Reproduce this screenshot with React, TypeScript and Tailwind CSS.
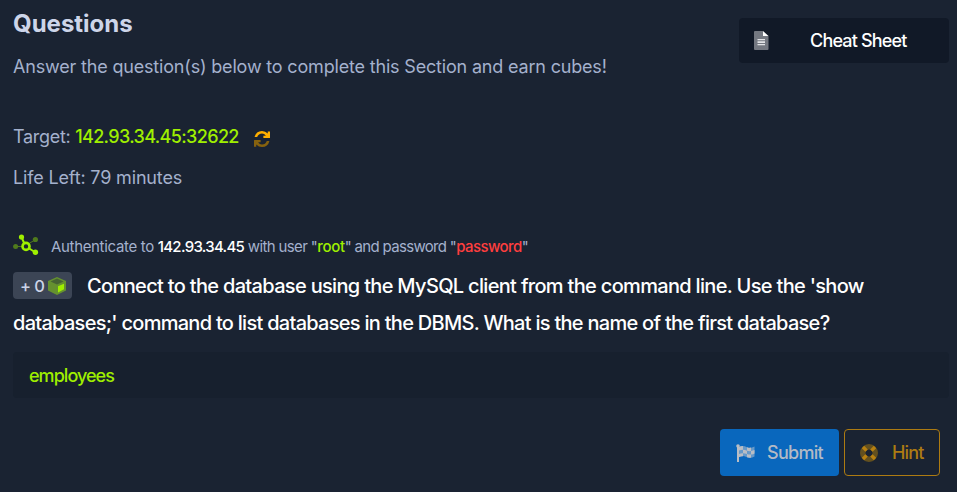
import React from "react";

function FileIcon() {
  return (
    <svg width="15" height="19" viewBox="0 0 15 19" className="shrink-0">
      <path d="M1 0h8v5h5.500v13a1 1 0 0 1-1 1H1a1 1 0 0 1-1-1V1a1 1 0 0 1 1-1z" fill="#747881" />
      <path d="M9 0 14.500 5H9z" fill="#fff" />
      <path d="M3.500 8h7.500v1.300H3.500zM3.500 10.300h7.500v1.700H3.500zM3.500 13h7.500v1.300H3.500z" fill="#e2e3e6" />
    </svg>
  );
}

function RefreshIcon() {
  return (
    <svg width="16" height="16" viewBox="0 0 512 512" className="shrink-0">
      <path d="M0 500V300q0-12 12-12h200v72h-81q48 72 125 72 110 0 155-112h83q-48 192-238 192-110 0-184-83v71z" fill="#86620f" />
      <path d="M512 12v200q0 12-12 12H300v-72h81q-48-72-125-72Q146 80 101 192H18Q66 0 256 0q110 0 184 83V12z" fill="#ffaf00" />
    </svg>
  );
}

function NodesIcon() {
  return (
    <svg width="26" height="22" viewBox="0 0 26 22" className="shrink-0">
      <g fill="#4f7a1c" stroke="#4f7a1c">
        <path d="M3 12.500h6M16 9.500l5-3" strokeWidth="1" />
        <circle cx="2.600" cy="12.500" r="2.500" stroke="none" />
        <circle cx="22.400" cy="5.500" r="2.600" stroke="none" />
      </g>
      <path d="m8.500 3 3 7M15.500 14l7 4.500" stroke="#9fef00" strokeWidth="2" />
      <circle cx="8.500" cy="3" r="2.600" fill="#9fef00" />
      <circle cx="22.400" cy="18.300" r="2.700" fill="#9fef00" />
      <circle cx="13" cy="12.400" r="3.500" fill="#1a2332" stroke="#9fef00" strokeWidth="2.600" />
    </svg>
  );
}

function CubeIcon() {
  return (
    <svg width="18" height="18" viewBox="0 0 18 18" className="shrink-0">
      <path d="m9 0 9 4v9.500L9 18l-9-4.500V4z" fill="#65912f" />
      <path d="m2.500 4.600 6.500-3 6.500 3-6.500 2.800z" fill="#466334" />
      <path d="M10 9.200 16 6.700v5.600l-6 3.100z" fill="#9fef00" />
    </svg>
  );
}

function FlagIcon() {
  return (
    <svg width="19" height="18" viewBox="0 0 19 18" className="shrink-0">
      <path d="M3 3q4-2 7.500 0t8-.5v10q-4 2.500-8 .500T3 13z" fill="#6699c9" />
      <path d="M3 3q2-1 4-.9v3.700q-2 0-4 .8zM7 5.800q2 .2 4 1V10q-2-.8-4-.8zM3 9.900q2-.8 4-.7v3q-2 0-4 .8zM11 3.200q2 .8 4 .4v3.500q-2 .4-4-.3zM15 7.100q2-.4 3.500-1v3.300q-1.500.8-3.500 1zM11 10q2 .8 4 .4v3.200q-2 .3-4-.4z" fill="#b9bdc4" />
      <path d="M1 1.500h2V18H1z" fill="#b9bdc4" />
      <circle cx="2" cy="2" r="1.800" fill="#b9bdc4" />
    </svg>
  );
}

function LifeRingIcon() {
  return (
    <svg width="18" height="18" viewBox="0 0 18 18" className="shrink-0">
      <circle cx="9" cy="9" r="6.250" fill="none" stroke="#63501f" strokeWidth="5.500" />
      <path d="m3 3 3.600 3.600M15 3l-3.600 3.600M3 15l3.600-3.600M15 15l-3.600-3.600" stroke="#b78011" strokeWidth="3.400" />
    </svg>
  );
}

export default function App() {
  return (
    <main className="h-[492px] w-[957px] overflow-hidden bg-[#1a2332] pl-[13px] pr-2 font-['Inter','Liberation_Sans',sans-serif] text-lg text-[#a4b1cd]">
      <header className="flex h-[118px] items-start justify-between">
        <div className="pt-2">
          <h4 className="text-2xl leading-8 font-bold text-[#cdd5e9]"><span>Questions</span></h4>
          <p className="mt-[13px] whitespace-nowrap leading-7 tracking-[-0.18px]">
            <span>Answer the question(s) below to complete this Section and earn cubes!</span>
          </p>
        </div>
        <button className="mt-[18px] flex h-[45px] w-[210px] items-center rounded bg-[#111927] pl-[15px] font-medium text-white">
          <FileIcon />
          <span className="ml-[41px] mt-px whitespace-nowrap tracking-[-0.82px]">Cheat Sheet</span>
        </button>
      </header>

      <section className="h-[109px]">
        <div className="flex h-[38px] items-center whitespace-nowrap tracking-[-0.3px]">
          <span>Target: <span className="font-medium tracking-[-0.64px] text-[#9fef00]">142.93.34.45:32622</span></span>
          <span className="ml-[15px] mt-1"><RefreshIcon /></span>
        </div>
        <p className="mt-[3px] flex h-[38px] items-center tracking-[-0.16px]"><span>Life Left: 79 minutes</span></p>
      </section>

      <section>
        <div className="flex h-10 items-center">
          <span className="mb-1"><NodesIcon /></span>
          <p className="ml-3 whitespace-nowrap text-[15px] tracking-[-0.68px]">
            <span className="tracking-[-0.33px]">Authenticate to </span><span className="font-medium tracking-[-0.7px] text-white">142.93.34.45</span><span className="tracking-[-0.62px]"> with user "</span><span className="font-medium tracking-[-0.3px] text-[#9fef00]">root</span>" and password "<span className="font-medium tracking-[-0.58px] text-[#ff3e3e]">password</span>"
          </p>
        </div>
        <div className="text-xl font-medium text-white">
          <div className="flex h-[37px] items-center">
            <span className="flex h-[27px] w-[59px] items-center rounded bg-[#3c4555] pl-[7px] text-[16.5px] text-[#cdd5e9]">
              <span className="w-7 whitespace-nowrap pt-0.5 tracking-[-0.6px]">+ 0</span><CubeIcon />
            </span>
            <span className="ml-[15px] whitespace-nowrap tracking-[-0.68px]">Connect to the database using the MySQL client from the command line. Use the 'show</span>
          </div>
          <p className="flex h-[37px] items-center whitespace-nowrap tracking-[-0.72px]"><span>databases;' command to list databases in the DBMS. What is the name of the first database?</span></p>
        </div>
      </section>

      <div className="mt-[11px] flex h-[46px] items-center rounded bg-[#17202e] pl-4 pt-0.5 font-medium text-[#9fef00]">
        <span className="tracking-[-0.96px]">employees</span>
      </div>

      <footer className="mt-[31px] flex justify-end gap-[5px] pr-[9px] font-medium">
        <button className="flex h-[47px] w-[119px] items-center rounded bg-[#0967bd] pl-4 tracking-[-0.7px] text-[#b3bac5]">
          <FlagIcon /><span className="ml-3">Submit</span>
        </button>
        <button className="flex h-[47px] w-24 items-center rounded border border-[#ad7b12] pl-[15px] tracking-[-0.8px] text-[#ad7b12]">
          <LifeRingIcon /><span className="ml-[14px]">Hint</span>
        </button>
      </footer>
    </main>
  );
}
